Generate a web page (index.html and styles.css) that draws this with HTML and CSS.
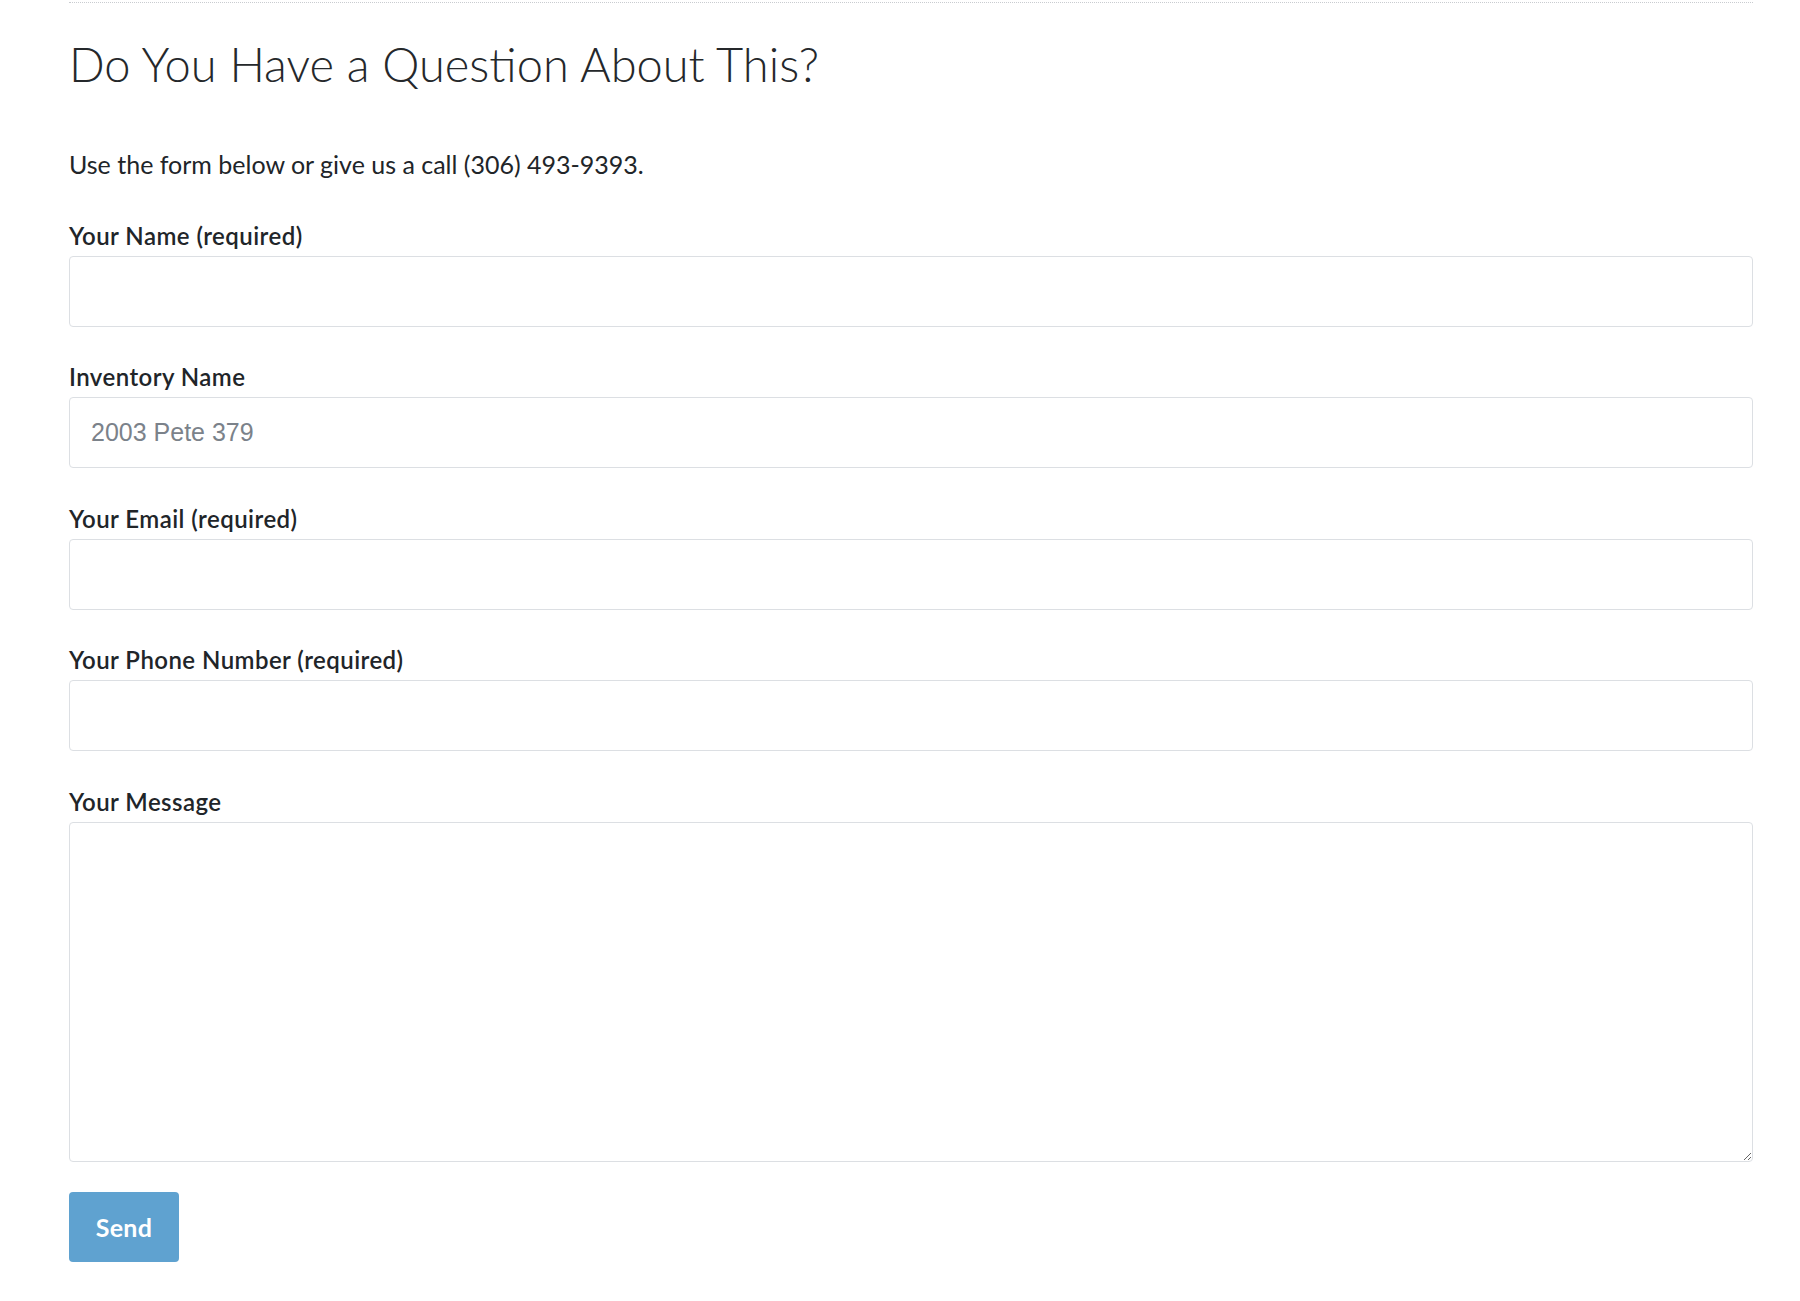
FILE: index.html
```html
<!DOCTYPE html>
<html lang="en">
<head>
<meta charset="utf-8">
<title>Do You Have a Question About This?</title>
<link rel="stylesheet" href="styles.css">
</head>
<body>
<div class="container">
  <div class="rule"></div>
  <h1 class="title">Do You Have a Question About This?</h1>
  <p class="intro">Use the form below or give us a call (306) 493-9393.</p>
  <form class="form">
    <div class="group">
      <label class="label" for="name">Your Name (required)</label>
      <input class="field" id="name" type="text">
    </div>
    <div class="group">
      <label class="label" for="inv">Inventory Name</label>
      <input class="field field-readonly" id="inv" type="text" value="2003 Pete 379" readonly>
    </div>
    <div class="group">
      <label class="label" for="email">Your Email (required)</label>
      <input class="field" id="email" type="email">
    </div>
    <div class="group">
      <label class="label" for="phone">Your Phone Number (required)</label>
      <input class="field" id="phone" type="tel">
    </div>
    <div class="group group-last">
      <label class="label" for="msg">Your Message</label>
      <textarea class="field area" id="msg"></textarea>
    </div>
    <button class="send" type="button">Send</button>
  </form>
</div>
</body>
</html>
```

FILE: styles.css
```css
html, body {
  margin: 0;
  padding: 0;
  background: #ffffff;
}
body {
  font-family: Lato, "Noto Sans", sans-serif;
  color: #212529;
}
.container {
  width: 1684px;
  margin-left: 69px;
  padding-top: 2px;
}
.rule {
  border-top: 1px dotted #c9ccd0;
  height: 0;
}
.title {
  margin: 33px 0 0 0;
  font-size: 47px;
  font-weight: 300;
  line-height: 57.6px;
  color: #25282b;
}
.intro {
  margin: 53px 0 0 0;
  font-size: 25px;
  line-height: 34.5px;
}
.form {
  margin-top: 38.5px;
  display: flex;
  flex-direction: column;
  align-items: flex-start;
}
.group {
  display: flex;
  flex-direction: column;
  width: 100%;
  margin-bottom: 34.5px;
}
.group-last {
  margin-bottom: 30px;
}
.label {
  font-size: 24px;
  font-weight: 600;
  letter-spacing: 0.45px;
  line-height: 31.5px;
  margin-bottom: 4.5px;
  color: #212529;
}
.field {
  box-sizing: border-box;
  width: 100%;
  height: 71px;
  margin: 0;
  padding: 0 21px;
  border: 1px solid #dcdfe3;
  border-radius: 4px;
  background: #ffffff;
  font-family: "Liberation Sans", Arial, sans-serif;
  font-size: 25px;
  color: #495057;
  outline: none;
}
.field-readonly {
  color: #7b828a;
}
.area {
  height: 340px;
  padding: 14px 21px;
  resize: vertical;
}
.send {
  box-sizing: border-box;
  width: 110px;
  height: 70px;
  padding: 0;
  border: none;
  border-radius: 4px;
  background: #5fa2d0;
  color: #ffffff;
  font-family: Lato, "Noto Sans", sans-serif;
  font-size: 25px;
  font-weight: 700;
  letter-spacing: 0.3px;
  cursor: pointer;
}
```
